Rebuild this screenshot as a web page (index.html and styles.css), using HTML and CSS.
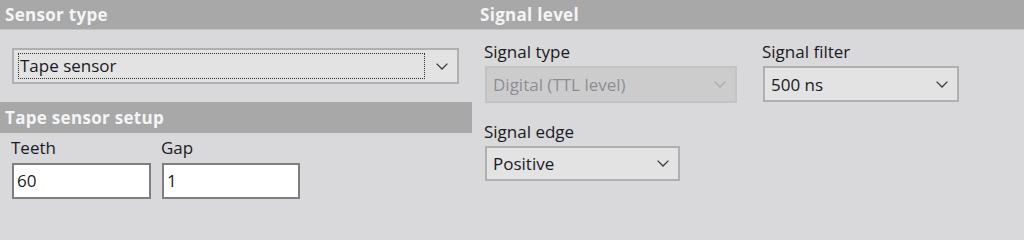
FILE: index.html
```html
<!DOCTYPE html>
<html>
<head>
<meta charset="utf-8">
<link rel="stylesheet" href="styles.css">
</head>
<body>
<div class="panel">
  <section class="col left">
    <div class="hdr">Sensor type</div>
    <div class="sensor-row">
      <div class="select sensor">
        <span class="focusbox">Tape sensor</span>
        <svg class="chev" viewBox="0 0 12 7" width="12" height="7"><path d="M0.6 0.6 L6 6 L11.4 0.6" fill="none" stroke="currentColor" stroke-width="1.3"/></svg>
      </div>
    </div>
    <div class="hdr sub">Tape sensor setup</div>
    <div class="fields">
      <div class="field teeth">
        <span class="lbl">Teeth</span>
        <div class="input">60</div>
      </div>
      <div class="field gap">
        <span class="lbl">Gap</span>
        <div class="input">1</div>
      </div>
    </div>
  </section>
  <section class="col right">
    <div class="hdr">Signal level</div>
    <div class="sig-grid">
      <div class="field stype">
        <span class="lbl">Signal type</span>
        <div class="select disabled">
          <span class="val">Digital (TTL level)</span>
          <svg class="chev" viewBox="0 0 12 7" width="12" height="7"><path d="M0.6 0.6 L6 6 L11.4 0.6" fill="none" stroke="currentColor" stroke-width="1.3"/></svg>
        </div>
      </div>
      <div class="field sfilter">
        <span class="lbl">Signal filter</span>
        <div class="select">
          <span class="val">500 ns</span>
          <svg class="chev" viewBox="0 0 12 7" width="12" height="7"><path d="M0.6 0.6 L6 6 L11.4 0.6" fill="none" stroke="currentColor" stroke-width="1.3"/></svg>
        </div>
      </div>
      <div class="field sedge">
        <span class="lbl">Signal edge</span>
        <div class="select">
          <span class="val">Positive</span>
          <svg class="chev" viewBox="0 0 12 7" width="12" height="7"><path d="M0.6 0.6 L6 6 L11.4 0.6" fill="none" stroke="currentColor" stroke-width="1.3"/></svg>
        </div>
      </div>
    </div>
  </section>
</div>
</body>
</html>
```
FILE: styles.css
```css
* { box-sizing: border-box; }
html, body {
  margin: 0;
  padding: 0;
  background: #d9d8da;
  width: 1024px;
  height: 217px;
  overflow: hidden;
}
body {
  font-family: "Open Sans", "Noto Sans", sans-serif;
  font-size: 17px;
  color: #1a1a26;
}
.panel {
  display: grid;
  grid-template-columns: 475px 1fr;
  height: 217px;
}
.col {
  display: flex;
  flex-direction: column;
}
.hdr {
  height: 30px;
  background: #a8a8a8;
  border-bottom: 1px solid #c2c2c2;
  color: #f4f4f6;
  font-weight: 700;
  font-size: 17px;
  letter-spacing: 0.3px;
  line-height: 29px;
  padding-left: 5px;
  white-space: nowrap;
}
.hdr.sub {
  width: 472px;
  height: 31px;
  line-height: 31px;
  border-bottom: none;
}
.sensor-row {
  padding: 18px 16px 18px 12px;
}
.select {
  height: 36px;
  background: #e3e3e4;
  border: 2px solid #b0b0b0;
  display: flex;
  align-items: center;
  justify-content: space-between;
  padding: 0 9px 0 4px;
  white-space: nowrap;
}
.select .val { padding-left: 2px; }
.select .chev { color: #3a3a3a; flex: none; }
.select.sensor {
  padding: 3px 9px 3px 4px;
}
.focusbox {
  width: 407px;
  height: 26px;
  border: 1px dotted #303030;
  padding-left: 1px;
  line-height: 24px;
}
.select.disabled {
  background: #cdcccd;
  border-color: #c3c3c3;
  color: #8d8d95;
  height: 37px;
}
.select.disabled .chev { color: #ababab; }
.fields {
  display: flex;
  gap: 11px;
  padding: 4px 0 0 12px;
}
.field {
  display: flex;
  flex-direction: column;
}
.lbl {
  height: 22px;
  line-height: 22px;
  margin-bottom: 4px;
  margin-left: -1px;
  white-space: nowrap;
}
.input {
  height: 36px;
  background: #ffffff;
  border: 2px solid #7f7f7f;
  padding-left: 3px;
  line-height: 32px;
}
.teeth .input { width: 139px; }
.gap .input { width: 138px; }
.sig-grid {
  display: grid;
  grid-template-columns: 252px 196px;
  column-gap: 26px;
  row-gap: 18px;
  padding: 11px 0 0 10px;
}
.sig-grid .lbl { margin-bottom: 3px; }
.sfilter .select { height: 36px; }
.sedge { width: 195px; }
.sedge .select { height: 35px; }
```
